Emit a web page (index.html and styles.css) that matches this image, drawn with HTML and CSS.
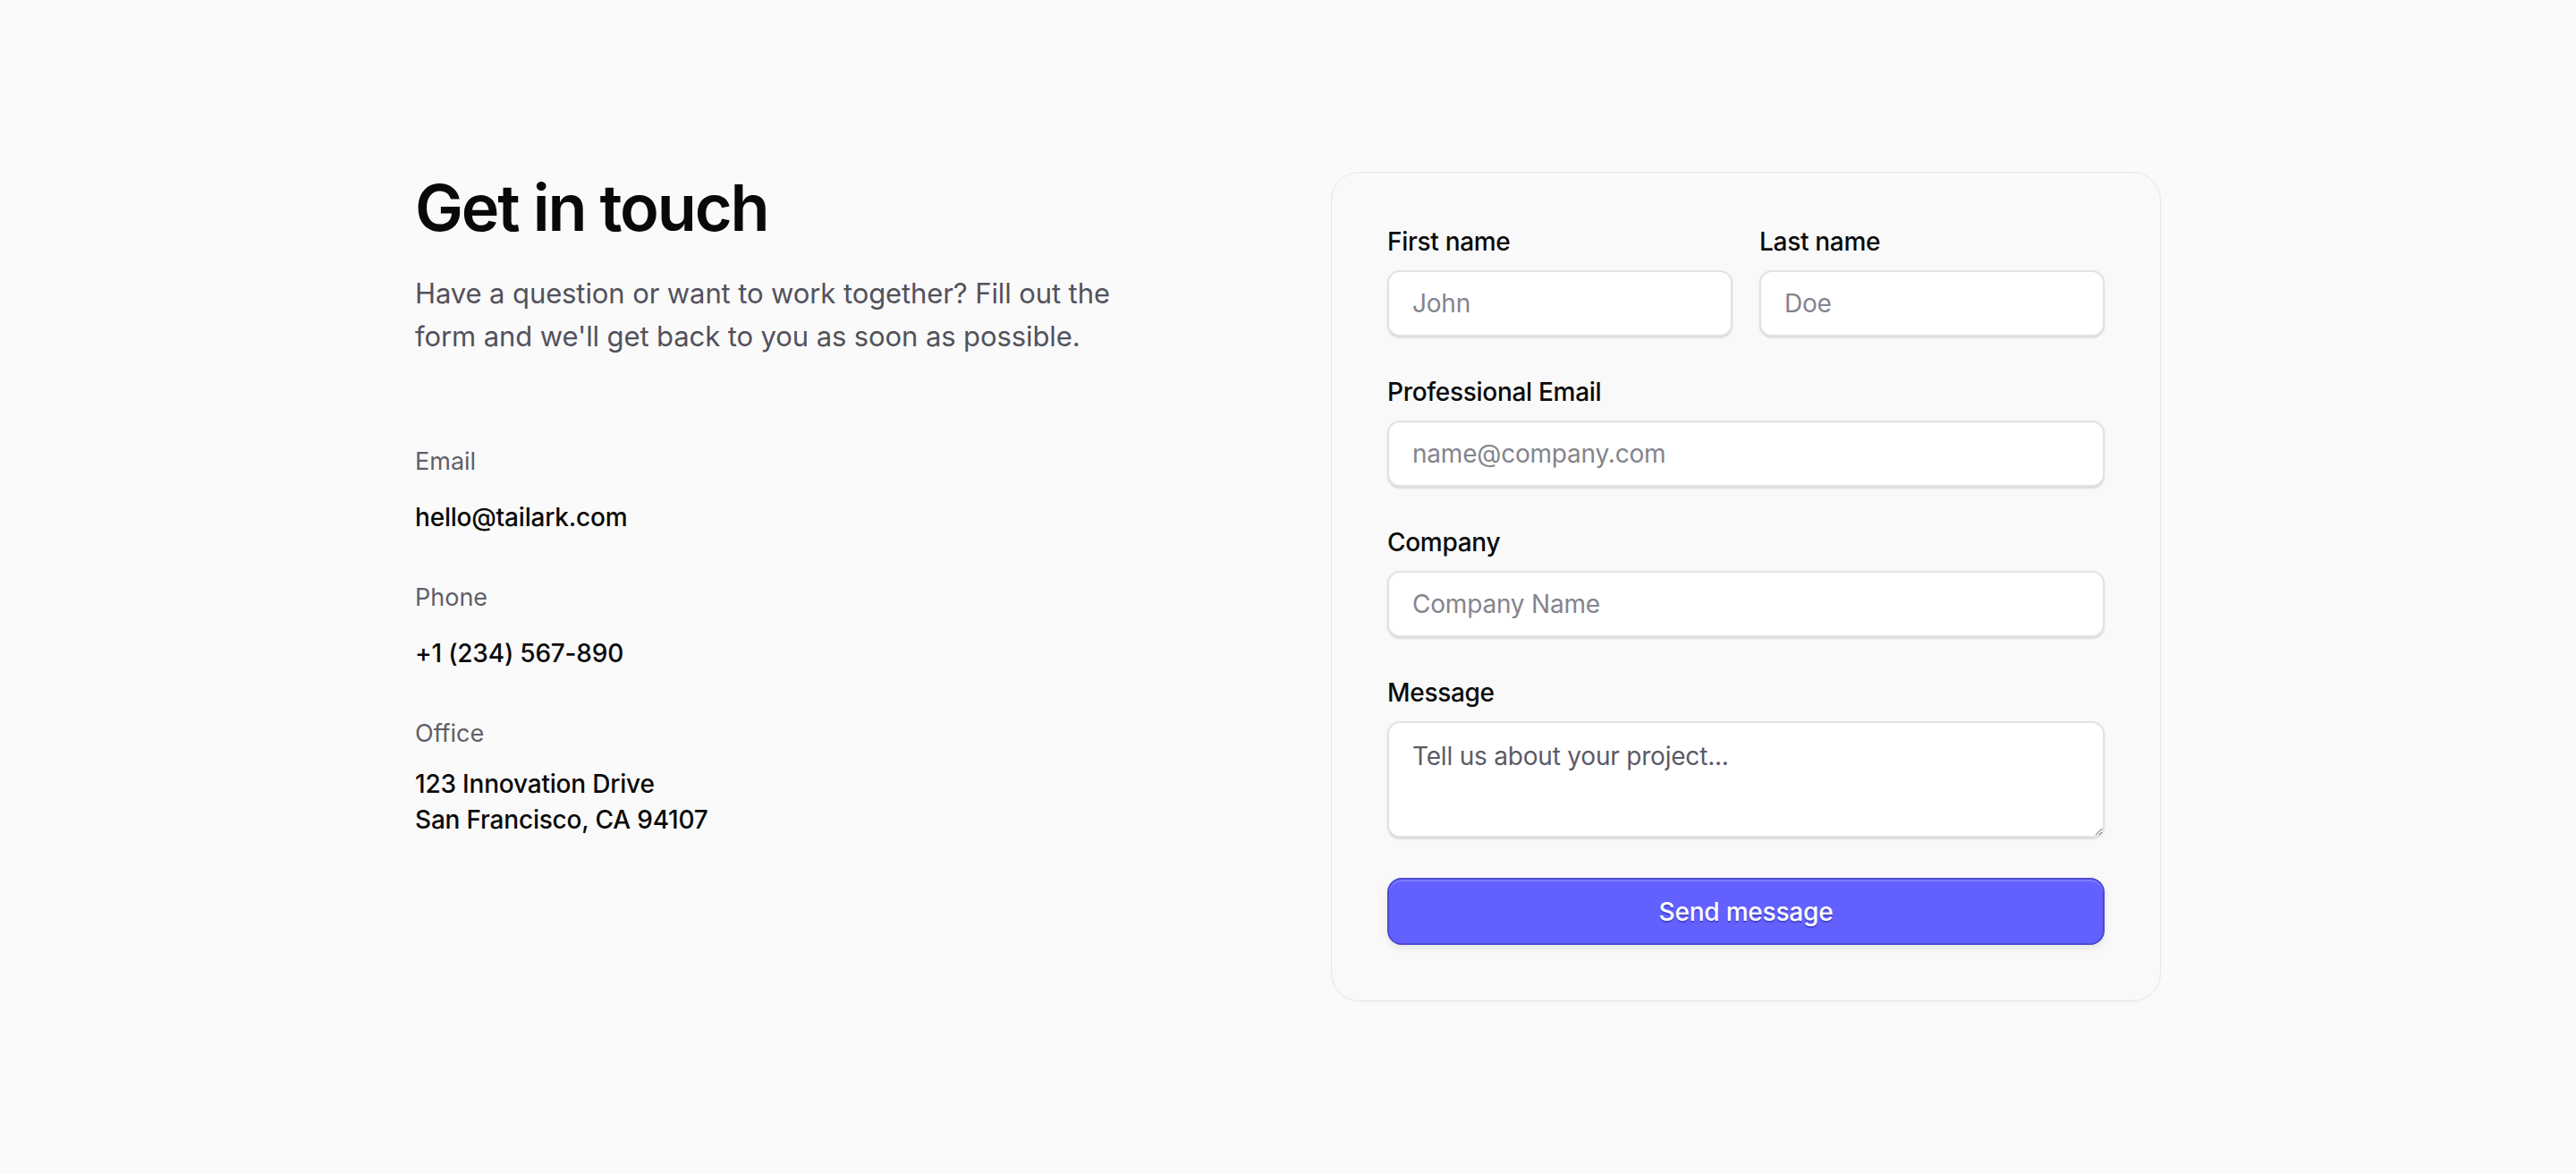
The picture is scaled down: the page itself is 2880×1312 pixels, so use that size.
FILE: index.html
```html
<!DOCTYPE html>
<html lang="en">
<head>
<meta charset="utf-8">
<title>Contact</title>
<link rel="stylesheet" href="styles.css">
</head>
<body>
<main class="contact">
  <div class="contact-grid">
    <div class="intro">
      <h1 class="title">Get in touch</h1>
      <p class="lead">Have a question or want to work together? Fill out the form and we'll get back to you as soon as possible.</p>
      <dl class="details">
        <div class="detail">
          <dt class="detail-label">Email</dt>
          <dd class="detail-value detail-link">hello@tailark.com</dd>
        </div>
        <div class="detail">
          <dt class="detail-label">Phone</dt>
          <dd class="detail-value detail-link">+1 (234) 567-890</dd>
        </div>
        <div class="detail">
          <dt class="detail-label">Office</dt>
          <dd class="detail-value detail-address">123 Innovation Drive<br>San Francisco, CA 94107</dd>
        </div>
      </dl>
    </div>
    <form class="card">
      <div class="row">
        <div class="field">
          <label class="label" for="first">First name</label>
          <input class="input" id="first" type="text" placeholder="John">
        </div>
        <div class="field">
          <label class="label" for="last">Last name</label>
          <input class="input" id="last" type="text" placeholder="Doe">
        </div>
      </div>
      <div class="field">
        <label class="label" for="email">Professional Email</label>
        <input class="input" id="email" type="email" placeholder="name@company.com">
      </div>
      <div class="field">
        <label class="label" for="company">Company</label>
        <input class="input" id="company" type="text" placeholder="Company Name">
      </div>
      <div class="field">
        <label class="label" for="message">Message</label>
        <textarea class="input textarea" id="message" placeholder="Tell us about your project..."></textarea>
      </div>
      <button class="submit" type="button">Send message</button>
    </form>
  </div>
</main>
</body>
</html>
```

FILE: styles.css
```css
* { box-sizing: border-box; }

html, body {
  margin: 0;
  padding: 0;
}

body {
  background: #fafafa;
  font-family: Inter, "Noto Sans", "Liberation Sans", sans-serif;
  color: #0a0a0a;
}

.contact {
  padding: 192px 48px 96px;
}

.contact-grid {
  max-width: 1952px;
  margin: 0 auto;
  display: grid;
  grid-template-columns: 1fr 1fr;
  column-gap: 96px;
  align-items: start;
}

.title {
  margin: 0;
  font-size: 72px;
  line-height: 80px;
  font-weight: 600;
  letter-spacing: -2.1px;
  color: #09090b;
}

.lead {
  margin: 32px 0 0;
  max-width: 800px;
  font-size: 31px;
  line-height: 48px;
  letter-spacing: -0.1px;
  color: #52525c;
}

.details {
  margin: 96px 0 0;
  display: flex;
  flex-direction: column;
  gap: 50px;
}

.detail {
  margin: 0;
}

.detail-label {
  font-size: 27px;
  line-height: 40px;
  color: #5f5f69;
}

.detail-value {
  margin: 0;
  font-size: 28px;
  line-height: 40px;
  font-weight: 500;
  letter-spacing: -0.2px;
  color: #0a0a0a;
}

.detail-link {
  margin-top: 22px;
}

.detail-address {
  margin-top: 16px;
}

.card {
  margin: 0;
  border: 1px solid #e6e6e8;
  border-radius: 32px;
  background: #f9f9f9;
  padding: 63px 62px 62px;
  display: flex;
  flex-direction: column;
  gap: 48px;
  box-shadow: 0 2px 4px rgba(0, 0, 0, 0.02);
}

.row {
  display: grid;
  grid-template-columns: 1fr 1fr;
  column-gap: 30px;
}

.field {
  display: flex;
  flex-direction: column;
  gap: 18px;
}

.label {
  font-size: 28px;
  line-height: 28px;
  font-weight: 500;
  letter-spacing: -0.3px;
  color: #0a0a0a;
}

.input {
  width: 100%;
  height: 74px;
  padding: 0 26px;
  border: 2px solid #e2e2e4;
  border-radius: 14px;
  background: #ffffff;
  font-family: inherit;
  font-size: 28px;
  letter-spacing: -0.2px;
  color: #0a0a0a;
  box-shadow: 0 2px 2px rgba(0, 0, 0, 0.12);
  outline: none;
}

.input::placeholder {
  color: #84848d;
}

.textarea {
  height: 130px;
  padding: 17px 26px;
  line-height: 40px;
  resize: vertical;
}

.textarea::placeholder {
  color: #5b5b66;
}

.submit {
  margin-top: -3px;
  height: 75px;
  width: 100%;
  border: 2px solid #4b49d2;
  border-radius: 16px;
  background: #6261ff;
  color: #ffffff;
  font-family: inherit;
  font-size: 28px;
  font-weight: 500;
  letter-spacing: -0.2px;
  text-shadow: 0 2px 1px rgba(40, 30, 140, 0.45);
  box-shadow: inset 0 2px 0 rgba(255, 255, 255, 0.18), 0 4px 8px rgba(0, 0, 0, 0.08);
  cursor: pointer;
}
```
